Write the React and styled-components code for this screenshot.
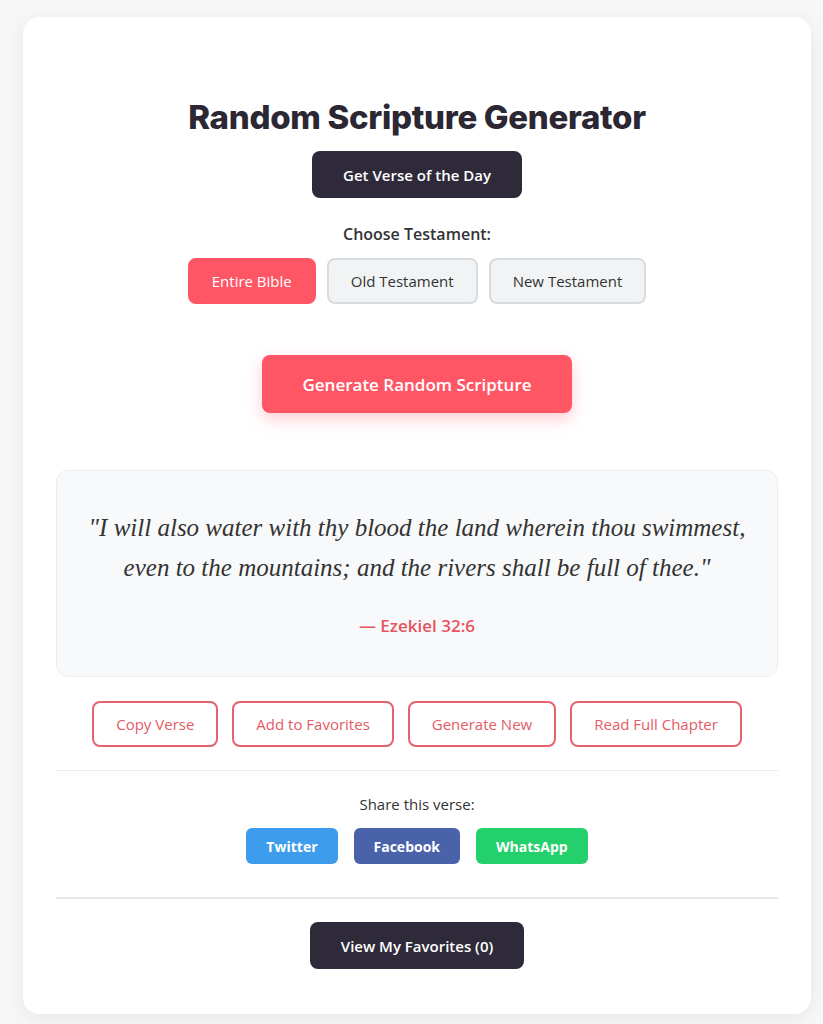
import React, { useState } from "react";
import styled, { createGlobalStyle } from "styled-components";

const GlobalStyle = createGlobalStyle`
  * { box-sizing: border-box; }
  body {
    margin: 0;
    background: #f7f7f8;
    font-family: "Open Sans", "Noto Sans", Arial, sans-serif;
    color: #333;
  }
`;

const Page = styled.div`
  padding: 17px 12px 11px 23px;
`;

const Card = styled.div`
  background: #fff;
  border-radius: 16px;
  box-shadow: 0 4px 18px rgba(0, 0, 0, 0.07);
  padding: 80px 33px 45px;
  display: flex;
  flex-direction: column;
  align-items: center;
`;

const Title = styled.h1`
  margin: 0;
  font-family: "Inter", "Noto Sans", sans-serif;
  font-weight: 800;
  font-size: 33px;
  line-height: 40px;
  letter-spacing: -0.3px;
  color: #2b2733;
`;

const DarkButton = styled.button`
  margin-top: ${(p) => p.$top || 0}px;
  height: 47px;
  padding: 0 31px;
  border: none;
  border-radius: 8px;
  background: #2f2a3a;
  color: #fff;
  font-family: inherit;
  font-size: 15px;
  font-weight: 600;
  cursor: pointer;
`;

const Label = styled.div`
  margin-top: ${(p) => p.$top}px;
  font-size: ${(p) => p.$size}px;
  line-height: 24px;
  font-weight: ${(p) => p.$weight || 400};
  color: #333;
`;

const Row = styled.div`
  margin-top: ${(p) => p.$top}px;
  display: flex;
  justify-content: center;
  gap: ${(p) => p.$gap}px;
`;

const ToggleButton = styled.button`
  height: 46px;
  padding: 0 22px;
  border-radius: 8px;
  border: 2px solid ${(p) => (p.$active ? "#ff5666" : "#d9dcdf")};
  background: ${(p) => (p.$active ? "#ff5666" : "#f1f3f5")};
  color: ${(p) => (p.$active ? "#fff" : "#333")};
  font-family: inherit;
  font-size: 15px;
  font-weight: 500;
  cursor: pointer;
`;

const GenerateButton = styled.button`
  margin-top: 51px;
  height: 58px;
  padding: 0 40px;
  border: none;
  border-radius: 8px;
  background: #ff5666;
  color: #fff;
  font-family: inherit;
  font-size: 17px;
  font-weight: 600;
  box-shadow: 0 6px 16px rgba(255, 86, 102, 0.3);
  cursor: pointer;
`;

const QuoteBox = styled.div`
  margin-top: 57px;
  align-self: stretch;
  background: #f8f9fa;
  border: 1px solid #eceef0;
  border-radius: 12px;
  padding: 37px 20px 38px;
  text-align: center;
`;

const QuoteLine = styled.div`
  font-family: "Liberation Serif", "Times New Roman", serif;
  font-style: italic;
  font-size: 25px;
  line-height: 40px;
  white-space: nowrap;
  color: #333;
`;

const Reference = styled.div`
  margin-top: 26px;
  font-size: 17px;
  line-height: 24px;
  font-weight: 600;
  color: #e8535f;
`;

const OutlineButton = styled.button`
  height: 46px;
  padding: 0 22px;
  border-radius: 8px;
  border: 2px solid #e5636e;
  background: #fff;
  color: #e45b66;
  font-family: inherit;
  font-size: 15px;
  cursor: pointer;
`;

const Divider = styled.hr`
  margin: ${(p) => p.$top}px 0 0;
  align-self: stretch;
  border: none;
  height: ${(p) => p.$h}px;
  background: ${(p) => p.$color};
`;

const ShareButton = styled.button`
  height: 36px;
  padding: 0 20px;
  border: none;
  border-radius: 6px;
  background: ${(p) => p.$bg};
  color: #fff;
  font-family: inherit;
  font-size: 14px;
  font-weight: 700;
  cursor: pointer;
`;

const testaments = ["Entire Bible", "Old Testament", "New Testament"];
const actions = ["Copy Verse", "Add to Favorites", "Generate New", "Read Full Chapter"];
const networks = [
  { name: "Twitter", bg: "#3d9cec" },
  { name: "Facebook", bg: "#4a62aa" },
  { name: "WhatsApp", bg: "#24d06c" },
];

export default function App() {
  const [testament, setTestament] = useState("Entire Bible");
  const [favorites] = useState([]);

  return (
    <Page>
      <GlobalStyle />
      <Card>
        <Title>Random Scripture Generator</Title>
        <DarkButton $top={14}>Get Verse of the Day</DarkButton>

        <Label $top={24} $size={16} $weight={600}>Choose Testament:</Label>
        <Row $top={12} $gap={11}>
          {testaments.map((t) => (
            <ToggleButton key={t} $active={t === testament} onClick={() => setTestament(t)}>
              {t}
            </ToggleButton>
          ))}
        </Row>

        <GenerateButton>Generate Random Scripture</GenerateButton>

        <QuoteBox>
          <QuoteLine>"I will also water with thy blood the land wherein thou swimmest,</QuoteLine>
          <QuoteLine>even to the mountains; and the rivers shall be full of thee."</QuoteLine>
          <Reference>— Ezekiel 32:6</Reference>
        </QuoteBox>

        <Row $top={24} $gap={14}>
          {actions.map((a) => (
            <OutlineButton key={a}>{a}</OutlineButton>
          ))}
        </Row>

        <Divider $top={23} $h={1} $color="#ececec" />

        <Label $top={21} $size={15}>Share this verse:</Label>
        <Row $top={12} $gap={16}>
          {networks.map((n) => (
            <ShareButton key={n.name} $bg={n.bg}>{n.name}</ShareButton>
          ))}
        </Row>

        <Divider $top={33} $h={2} $color="#e6e6e6" />

        <DarkButton $top={23}>View My Favorites ({favorites.length})</DarkButton>
      </Card>
    </Page>
  );
}
